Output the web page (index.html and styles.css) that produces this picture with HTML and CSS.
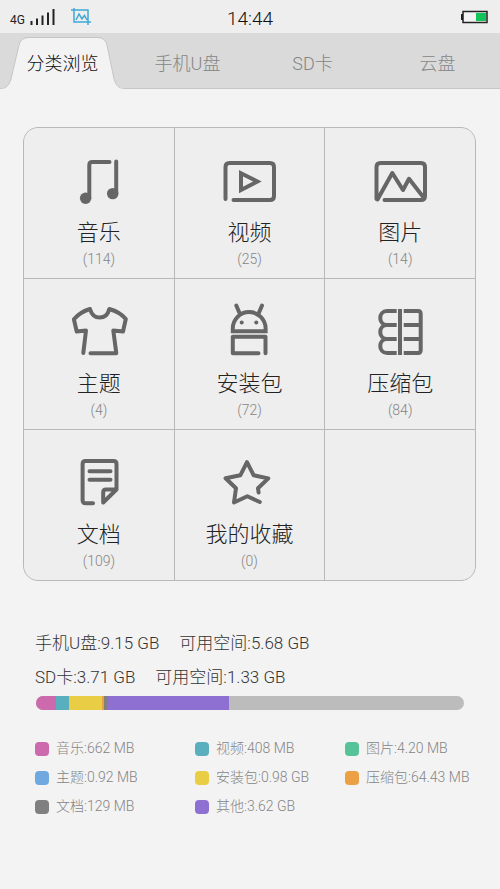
FILE: index.html
```html
<!DOCTYPE html>
<html lang="zh-CN">
<head>
<meta charset="utf-8">
<meta name="viewport" content="width=device-width, initial-scale=1">
<title>文件管理</title>
<link rel="stylesheet" href="styles.css">
</head>
<body>
<header class="status">
  <div class="status-left">
    <span class="network">4G</span>
    <svg class="signal" width="26" height="16" viewBox="0 0 26 16" aria-hidden="true">
      <path d="M1.500 12v4M7 9.500v6.500M12.500 6.500v9.500M18 3.500v12.500M23.500 0v16"/>
    </svg>
    <svg class="capture" width="20" height="18" viewBox="0 0 20 18" aria-hidden="true">
      <path d="M3 0v14h17M0 2h17v15M5 12l3-6 3 5 2.500-3.500L16 12"/>
    </svg>
  </div>
  <time class="clock">14:44</time>
  <div class="status-right">
    <svg width="30" height="14" viewBox="0 0 30 14" aria-hidden="true">
      <path d="M1 4h2v6H1z" fill="#222"/>
      <rect x="3" y="1.500" width="24" height="11" fill="#f3f3f3" stroke="#222" stroke-width="1.500"/>
      <rect x="16" y="3" width="10" height="8" fill="#12c558"/>
    </svg>
  </div>
</header>
<nav class="tabs">
  <button class="tab tab-active" type="button">
    <svg class="tab-shape" viewBox="0 0 125 52" preserveAspectRatio="none" aria-hidden="true">
      <path class="tab-fill" d="M0 52V51C7 51 9 48 11 42L19 8Q21 1 28 1H98Q105 1 107 8L114 42C116 48 118 51 125 51V52Z"/>
      <path class="tab-edge" d="M0 51.500C7 51.500 9 48 11 42L19 8Q21 .5 28 .5H98Q105 .5 107 8L114 42C116 48 118 51.500 125 51.500"/>
    </svg>
    <span class="tab-text">分类浏览</span>
  </button>
  <button class="tab" type="button">手机U盘</button>
  <button class="tab" type="button">SD卡</button>
  <button class="tab" type="button">云盘</button>
</nav>
<main>
  <section class="tiles">
    <button class="tile" type="button">
      <svg class="icon" viewBox="0 0 64 64" aria-hidden="true">
        <path d="M22.300 54V21Q22.300 18 25.300 18H42.500M49.200 17.500V50"/>
        <circle class="solid" cx="18.600" cy="54.200" r="5.700"/><circle class="solid" cx="45.700" cy="49.600" r="5.700"/>
      </svg>
      <span class="name">音乐</span><span class="count">(114)</span>
    </button>
    <button class="tile" type="button">
      <svg class="icon" viewBox="0 0 64 64" aria-hidden="true">
        <path d="M8.500 55V23Q8.500 19 12.500 19H53Q57 19 57 23V52Q57 56 53 56H16.500"/>
        <path class="sharp" d="M24 29.200L40.300 37.500 24 46Z"/>
      </svg>
      <span class="name">视频</span><span class="count">(25)</span>
    </button>
    <button class="tile" type="button">
      <svg class="icon" viewBox="0 0 64 64" aria-hidden="true">
        <path d="M8.500 55V23Q8.500 19 12.500 19H53Q57 19 57 23V52Q57 56 53 56H16.500M9.500 55.500L24.300 29 35 46 41 34.800 56 54"/>
      </svg>
      <span class="name">图片</span><span class="count">(14)</span>
    </button>
    <button class="tile" type="button">
      <svg class="icon" viewBox="0 0 64 64" aria-hidden="true">
        <path d="M16.300 58L19 35.500 9.700 36.500 6.900 24.300Q13 17 23 14C24.500 19.500 28 22.600 32.700 22.600S41 19.500 42.300 14Q53 17 58.800 24L56 36.500 46.300 35.500 49.300 58.300H23.500"/>
      </svg>
      <span class="name">主题</span><span class="count">(4)</span>
    </button>
    <button class="tile" type="button">
      <svg class="icon" viewBox="0 0 64 64" aria-hidden="true">
        <path class="sharp" d="M15.800 36.300V33.500A16.400 16.400 0 0 1 48.600 33.500V36.300Z"/>
        <path d="M19.300 10.500L22.500 18M45 10.500L41.800 18M41.500 58.300H15.800V41.800H48.500V58.300"/>
        <circle class="solid" cx="24.700" cy="27.400" r="2"/><circle class="solid" cx="39.300" cy="27.400" r="2"/>
      </svg>
      <span class="name">安装包</span><span class="count">(72)</span>
    </button>
    <button class="tile" type="button">
      <svg class="icon" viewBox="0 0 64 64" aria-hidden="true">
        <path class="flat" d="M32 14V60M28.700 16H19C10 16 10 30 19 30H28.700M19 30C10 30 10 44 19 44H28.700M19 44C10 44 10 58 19 58H28.700M35.700 16H50Q52.700 16 52.700 18.700V55.300Q52.700 58 50 58H35.700M35.700 30H52M35.700 44H52"/>
      </svg>
      <span class="name">压缩包</span><span class="count">(84)</span>
    </button>
    <button class="tile" type="button">
      <svg class="icon" viewBox="0 0 64 64" aria-hidden="true">
        <path d="M26 57.200H18.600Q15.600 57.200 15.600 54.200V18Q15.600 15 18.600 15H46.500Q49.500 15 49.500 18V43.500M22.500 25.300H43.500M22.500 33.800H43.500M49.500 43.500L36.200 56.500V46.200Q36.200 43.500 39 43.500Z"/>
      </svg>
      <span class="name">文档</span><span class="count">(109)</span>
    </button>
    <button class="tile" type="button">
      <svg class="icon" viewBox="0 0 64 64" aria-hidden="true">
        <path d="M42.800 56L30.300 50.300 17 56.500 19 42.300 8.600 32.200 23.300 29.300 30 16.200 36.700 29.300 51.300 32.400 41 42.300 41.600 46.500"/>
      </svg>
      <span class="name">我的收藏</span><span class="count">(0)</span>
    </button>
    <div class="tile"></div>
  </section>
  <section class="storage">
    <p class="volume"><span>手机U盘:9.15 GB</span><span>可用空间:5.68 GB</span></p>
    <p class="volume"><span>SD卡:3.71 GB</span><span>可用空间:1.33 GB</span></p>
    <div class="bar">
      <span class="pink" style="width:4.600%"></span><span class="teal" style="width:3.200%"></span><span class="yellow" style="width:7.600%"></span><span class="orange" style="width:.6%"></span><span class="gray" style="width:.7%"></span><span class="purple" style="width:28.500%"></span>
    </div>
    <ul class="legend">
      <li><i class="pink"></i>音乐:662 MB</li>
      <li><i class="teal"></i>视频:408 MB</li>
      <li><i class="green"></i>图片:4.20 MB</li>
      <li><i class="blue"></i>主题:0.92 MB</li>
      <li><i class="yellow"></i>安装包:0.98 GB</li>
      <li><i class="orange"></i>压缩包:64.43 MB</li>
      <li><i class="gray"></i>文档:129 MB</li>
      <li><i class="purple"></i>其他:3.62 GB</li>
    </ul>
  </section>
</main>
</body>
</html>
```
FILE: styles.css
```css
* {
  box-sizing: border-box;
}

body {
  margin: 0;
  background: #f3f3f3;
  color: #333;
  font-family: Roboto, "Noto Sans CJK SC", sans-serif;
  font-weight: 300;
}

button {
  margin: 0;
  padding: 0;
  border: 0;
  background: none;
  color: inherit;
  font: inherit;
}

/* Status bar */
.status {
  display: grid;
  grid-template-columns: 1fr auto 1fr;
  align-items: center;
  height: 33px;
  padding: 0 10px;
  background: #eee;
  color: #222;
}

.status-left {
  display: flex;
  align-items: center;
  height: 33px;
}

.network {
  padding-top: 6px;
  font-size: 12px;
  font-weight: 400;
}

.signal {
  margin-left: 5px;
  fill: none;
  stroke: #222;
  stroke-width: 2;
}

.capture {
  margin-left: 15px;
  fill: none;
  stroke: #3fa9d6;
  stroke-width: 1.5;
}

.clock {
  padding-top: 4px;
  color: #111;
  font-size: 19px;
  line-height: 24px;
}

.status-right {
  display: flex;
  justify-content: flex-end;
}

/* Tabs */
.tabs {
  display: grid;
  grid-template-columns: repeat(4, 1fr);
  height: 56px;
  border-bottom: 1px solid #c6c6c6;
  background: #dadada;
}

.tab {
  position: relative;
  padding-top: 2px;
  color: #858585;
  font-size: 18px;
}

.tab-active {
  color: #111;
}

.tab-shape {
  position: absolute;
  left: 0;
  bottom: -1px;
  width: 100%;
  height: 52px;
}

.tab-fill {
  fill: #f3f3f3;
}

.tab-edge {
  fill: none;
  stroke: #c6c6c6;
}

.tab-text {
  position: relative;
}

/* Category tiles */
.tiles {
  display: grid;
  grid-template-columns: repeat(3, 1fr);
  gap: 1px;
  margin: 38px 24px 0 23px;
  overflow: hidden;
  border: 1px solid #b8b8b8;
  border-radius: 15px;
  background: #b8b8b8;
}

.tile {
  display: flex;
  flex-direction: column;
  align-items: center;
  min-height: 150px;
  padding: 16px 0 8px;
  background: #eee;
}

.icon {
  width: 64px;
  height: 64px;
  fill: none;
  stroke: #666;
  stroke-width: 4;
  stroke-linecap: round;
  stroke-linejoin: round;
}

.icon .solid {
  fill: #666;
  stroke: none;
}

.icon .sharp {
  stroke-linejoin: miter;
}

.icon .flat {
  stroke-linecap: butt;
}

.name {
  margin-top: 11px;
  color: #222;
  font-size: 22px;
  line-height: 28px;
}

.count {
  margin-top: 2px;
  color: #858585;
  font-size: 14px;
  line-height: 20px;
}

/* Storage summary */
.storage {
  padding: 45px 25px 32px 35px;
}

.volume {
  display: flex;
  gap: 20px;
  margin: 0;
  font-size: 17px;
  line-height: 34px;
}

.bar {
  display: flex;
  height: 14px;
  margin: 2px 11px 0 1px;
  overflow: hidden;
  border-radius: 7px;
  background: #bcbcbc;
}

.legend {
  display: grid;
  grid-template-columns: 16fr 15fr 13fr;
  margin: 24px 0 0;
  padding: 0;
  color: #858585;
  font-size: 14px;
  line-height: 29px;
  list-style: none;
  white-space: nowrap;
}

.legend li {
  display: flex;
  align-items: center;
  gap: 7px;
}

.legend i {
  width: 14px;
  height: 14px;
  border-radius: 4px;
}

.pink { background: #cd69ad; }
.teal { background: #5aafbf; }
.green { background: #55c397; }
.blue { background: #70a9df; }
.yellow { background: #e9cd45; }
.orange { background: #eba046; }
.gray { background: #808080; }
.purple { background: #8e70d2; }
```
